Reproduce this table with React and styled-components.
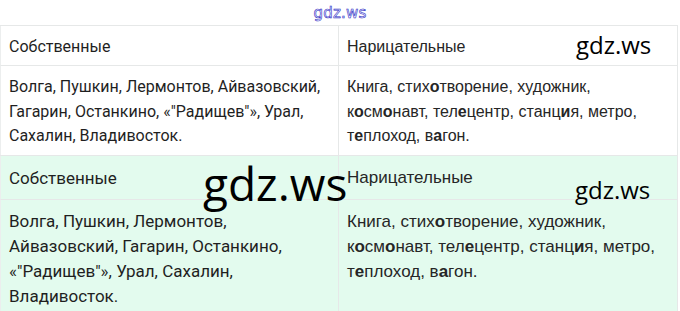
import styled, { createGlobalStyle } from 'styled-components';

const GlobalStyle = createGlobalStyle`
  html, body {
    margin: 0;
    padding: 0;
    background: #ffffff;
  }
  body {
    font-family: Roboto, 'Noto Sans', sans-serif;
    color: #1f1f1f;
  }
`;

const proper =
  'Волга, Пушкин, Лермонтов, Айвазовский, Гагарин, Останкино, «"Радищев"», Урал, Сахалин, Владивосток.';

const rows = [
  { tint: false, mark: 'small' },
  { tint: true, mark: 'big' },
];

// bold letters mark the unstressed vowels in the common nouns
const Common = () => (
  <>
    Книга, стих<b>о</b>творение, художник, к<b>о</b>см<b>о</b>навт, тел<b>е</b>центр, станц<b>и</b>я, метро,
    т<b>е</b>плоход, в<b>а</b>гон.
  </>
);

const Page = styled.div`
  width: 680px;
  position: relative;
`;

const TopMark = styled.div`
  height: 25px;
  display: flex;
  justify-content: center;
  align-items: center;
  font-family: 'DejaVu Sans', sans-serif;
  font-size: 15px;
  letter-spacing: 0.2px;
  color: #f4f4ff;
  -webkit-text-stroke: 0.6px #2b2bc4;
`;

const Section = styled.div`
  position: relative;
  width: 678px;
  display: grid;
  grid-template-columns: 339px 339px;
  background: ${({ $tint }) => ($tint ? '#e3fbee' : '#ffffff')};
  border-top: 1px solid #e6e8e8;
`;

const Cell = styled.div`
  box-sizing: border-box;
  border-left: ${({ $first }) => ($first ? '1px solid #eceeee' : 'none')};
  border-right: 1px solid #e6e8e8;
  font-family: ${({ $alt }) => ($alt ? "'Liberation Sans', Arial, sans-serif" : 'Roboto, sans-serif')};
  color: ${({ $alt }) => ($alt ? '#262626' : '#1f1f1f')};
`;

const Head = styled(Cell)`
  height: ${({ $tint }) => ($tint ? '44px' : '40px')};
  padding: ${({ $tint }) => ($tint ? '12px 8px 0' : '11px 8px 0')};
  font-size: ${({ $tint }) => ($tint ? '17px' : '16px')};
  line-height: 20px;
  border-bottom: 1px solid #e6e8e8;
`;

const Body = styled(Cell)`
  padding: ${({ $tint, $alt }) => ($tint ? ($alt ? '9px 8px 8px' : '9px 34px 8px 8px') : '9px 8px 6px')};
  font-size: ${({ $tint }) => ($tint ? '17px' : '16px')};
  line-height: ${({ $tint }) => ($tint ? '25px' : '24.5px')};

  b {
    font-weight: 700;
  }
`;

const Mark = styled.span`
  position: absolute;
  font-family: 'Open Sans', sans-serif;
  color: #000000;
  line-height: 1;
  pointer-events: none;
  left: ${({ $x }) => $x}px;
  top: ${({ $y }) => $y}px;
  font-size: ${({ $size }) => $size}px;
`;

const App = () => (
  <>
    <GlobalStyle />
    <Page>
      <TopMark>gdz.ws</TopMark>
      {rows.map((r, i) => (
        <Section key={i} $tint={r.tint}>
          <Head $tint={r.tint} $first>Собственные</Head>
          <Head $tint={r.tint} $alt>Нарицательные</Head>
          <Body $tint={r.tint} $first>{proper}</Body>
          <Body $tint={r.tint} $alt><Common /></Body>
          {r.mark === 'small' ? (
            <Mark $x={576} $y={7} $size={24}>gdz.ws</Mark>
          ) : (
            <>
              <Mark $x={203} $y={4} $size={46}>gdz.ws</Mark>
              <Mark $x={575} $y={22} $size={24}>gdz.ws</Mark>
            </>
          )}
        </Section>
      ))}
    </Page>
  </>
);

export default App;
